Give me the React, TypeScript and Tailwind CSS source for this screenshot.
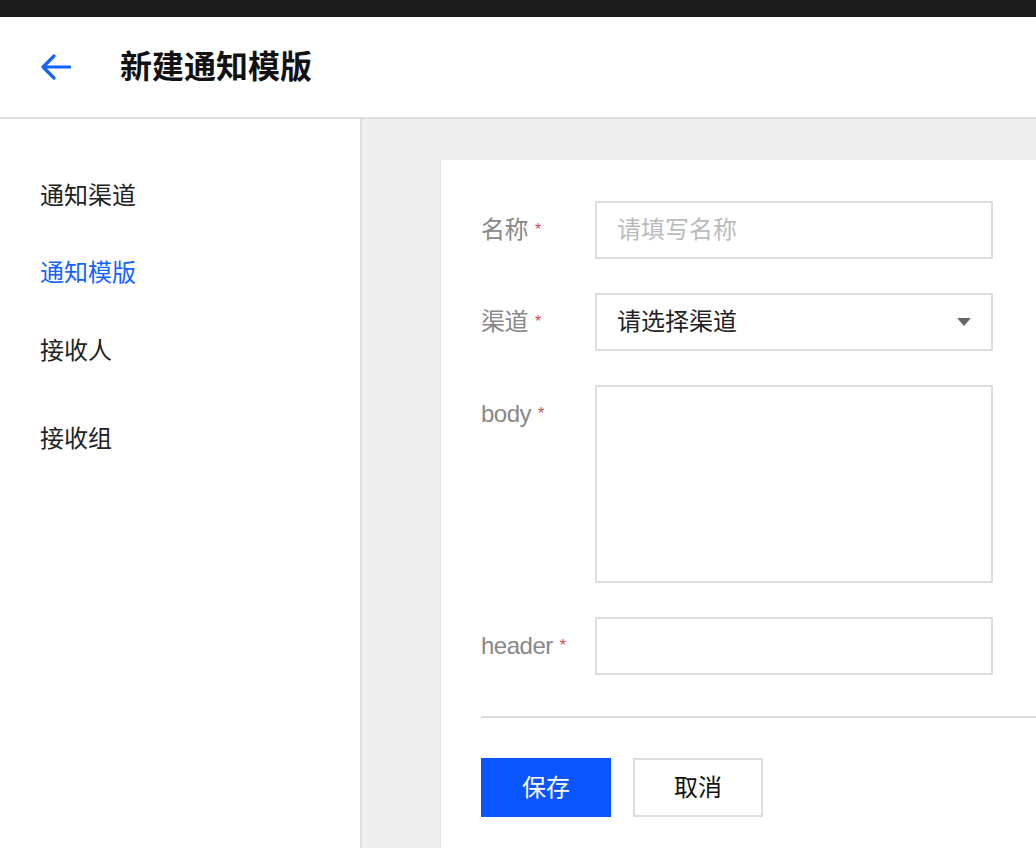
import React from "react";

const font = {
  fontFamily: '"Liberation Sans", "Noto Sans CJK SC", sans-serif',
};

function Required() {
  return <span className="ml-[7px] text-[16px] leading-none text-[#e5484d]">*</span>;
}

function Label({ text }: { text: string }) {
  return (
    <div className="flex h-[58px] w-[114px] shrink-0 items-center text-[24px] text-[#888]">
      <span className="tracking-[-0.5px]">{text}</span>
      <Required />
    </div>
  );
}

function App() {
  const menu = [
    { name: "通知渠道", cls: "mt-0" },
    { name: "通知模版", cls: "mt-[53px] text-[#1463ff]" },
    { name: "接收人", cls: "mt-[54px]" },
    { name: "接收组", cls: "mt-[64px]" },
  ];

  return (
    <div className="flex h-[848px] w-full flex-col overflow-hidden bg-white" style={font}>
      <div className="h-[17px] shrink-0 bg-[#1c1c1c]" />
      <div className="flex h-[102px] shrink-0 items-center border-b-2 border-[#dddddd] pl-[41px]">
        <svg width="30" height="26" viewBox="0 0 30 26" fill="none">
          <path d="M3 13H29" stroke="#1463ff" strokeWidth="3.2" strokeLinecap="round" />
          <path d="M13 2L2 13L13 24" stroke="#1463ff" strokeWidth="3.2" strokeLinecap="round" strokeLinejoin="round" />
        </svg>
        <h1 className="ml-[49px] text-[32px] font-bold leading-none text-[#111]">新建通知模版</h1>
      </div>
      <div className="flex flex-1">
        <div className="w-[362px] shrink-0 border-r-2 border-[#dddddd] pl-[40px] pt-[65px]">
          {menu.map((m) => (
            <div key={m.name} className={`text-[24px] leading-[24px] text-[#222] ${m.cls}`}>
              {m.name}
            </div>
          ))}
        </div>
        <div className="flex flex-1 bg-[#eeeeee] pl-[78px] pt-[41px]">
          <div className="flex-1 border-l border-[#e2e2e2] bg-white pl-[40px] pt-[41px]">
            <div className="flex flex-col gap-[34px]">
              <div className="flex">
                <Label text="名称" />
                <input
                  placeholder="请填写名称"
                  className="h-[58px] w-[398px] border-2 border-[#dddddd] px-[20px] text-[24px] text-[#222] outline-none placeholder:text-[#bbbbbb]"
                />
              </div>
              <div className="flex">
                <Label text="渠道" />
                <div className="flex h-[58px] w-[398px] items-center justify-between border-2 border-[#dddddd] pl-[20px] pr-[20px] text-[24px] text-[#222]">
                  <span>请选择渠道</span>
                  <svg width="14" height="8" viewBox="0 0 14 8">
                    <path d="M0 0H14L7 8Z" fill="#666" />
                  </svg>
                </div>
              </div>
              <div className="flex">
                <Label text="body" />
                <textarea className="h-[198px] w-[398px] resize-none border-2 border-[#dddddd] px-[20px] py-[12px] text-[24px] outline-none" />
              </div>
              <div className="flex">
                <Label text="header" />
                <input className="h-[58px] w-[398px] border-2 border-[#dddddd] px-[20px] text-[24px] outline-none" />
              </div>
            </div>
            <div className="mt-[41px] h-[2px] bg-[#dddddd]" />
            <div className="mt-[40px] flex gap-[22px]">
              <button className="h-[59px] w-[130px] bg-[#0b55ff] text-[24px] text-white">保存</button>
              <button className="h-[59px] w-[130px] border-2 border-[#dddddd] bg-white text-[24px] text-[#111]">取消</button>
            </div>
          </div>
        </div>
      </div>
    </div>
  );
}

export default App;
